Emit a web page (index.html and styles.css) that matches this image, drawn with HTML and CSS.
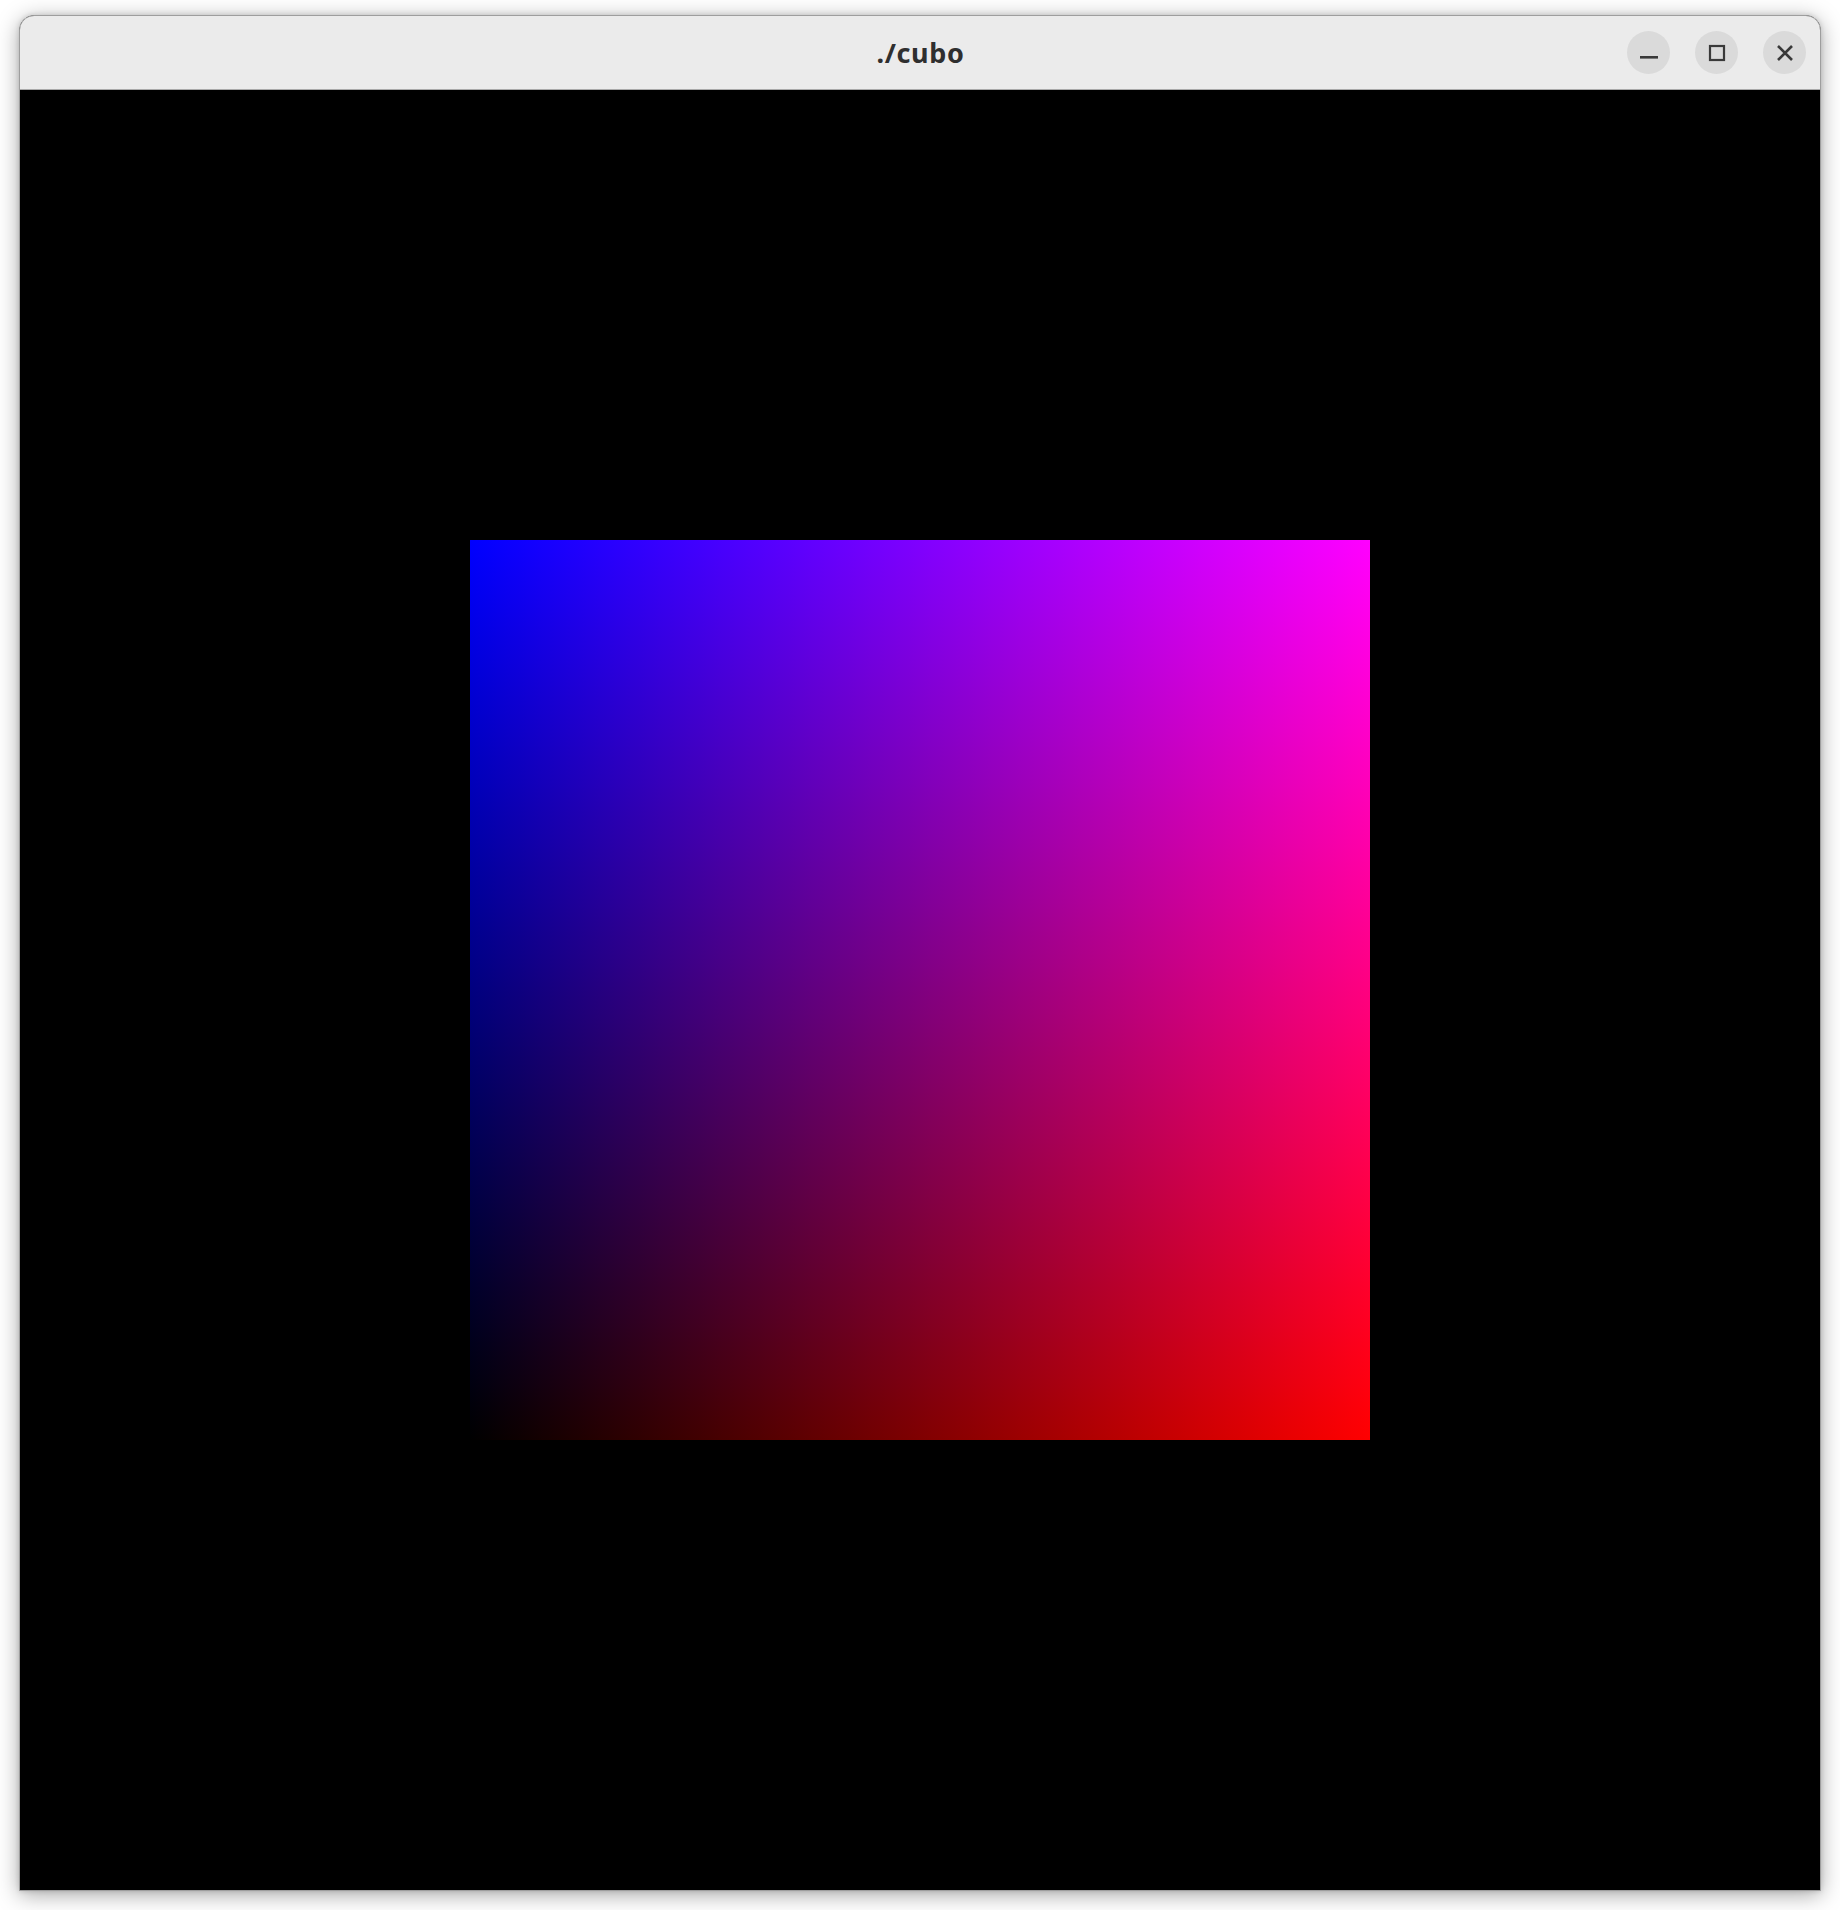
FILE: index.html
```html
<!DOCTYPE html>
<html lang="en">
<head>
<meta charset="utf-8">
<title>./cubo</title>
<link rel="stylesheet" href="styles.css">
</head>
<body>
<div class="desktop">
  <div class="window">
    <header class="titlebar">
      <div class="spacer"></div>
      <div class="title">./cubo</div>
      <div class="controls">
        <button class="ctl" aria-label="Minimize">
          <svg width="20" height="20" viewBox="0 0 20 20"><rect x="1" y="13" width="18" height="2.6" fill="#3a3a3a"/></svg>
        </button>
        <button class="ctl" aria-label="Maximize">
          <svg width="20" height="20" viewBox="0 0 20 20"><rect x="3" y="3" width="14" height="14" fill="none" stroke="#3a3a3a" stroke-width="2.2"/></svg>
        </button>
        <button class="ctl" aria-label="Close">
          <svg width="20" height="20" viewBox="0 0 20 20"><path d="M3 3 L17 17 M17 3 L3 17" stroke="#3a3a3a" stroke-width="2.6" stroke-linecap="butt"/></svg>
        </button>
      </div>
    </header>
    <main class="content">
      <div class="square"></div>
    </main>
  </div>
</div>
</body>
</html>
```

FILE: styles.css
```css
html, body {
  margin: 0;
  padding: 0;
  background: #ffffff;
}

.desktop {
  padding: 15px 0 0 19px;
  width: 1840px;
  height: 1910px;
  box-sizing: border-box;
}

.window {
  width: 1800px;
  border: 1px solid #9e9e9e;
  border-radius: 15px 15px 0 0;
  overflow: hidden;
  box-shadow: 0 4px 22px rgba(0, 0, 0, 0.34), 0 0 5px rgba(0, 0, 0, 0.15);
  background: #000;
}

.titlebar {
  height: 73px;
  background: #ebebeb;
  border-bottom: 1px solid #a9a9a9;
  display: grid;
  grid-template-columns: 1fr auto 1fr;
  align-items: center;
}

.title {
  font-family: "Noto Sans", "DejaVu Sans", sans-serif;
  font-weight: 700;
  font-size: 27px;
  letter-spacing: 0.6px;
  color: #2f2f2f;
  padding-left: 1px;
}

.controls {
  display: flex;
  justify-content: flex-end;
  align-items: center;
  gap: 25px;
  padding-right: 14px;
}

.ctl {
  width: 43px;
  height: 43px;
  border-radius: 50%;
  border: none;
  padding: 0;
  margin: 0;
  background: #dadada;
  display: flex;
  align-items: center;
  justify-content: center;
}

.ctl svg {
  display: block;
}

.content {
  height: 1800px;
  background: #000;
  display: flex;
  align-items: center;
  justify-content: center;
}

.square {
  width: 900px;
  height: 900px;
  background: linear-gradient(to right, #000000, #ff0000), linear-gradient(to bottom, #0000ff, #000000);
  background-blend-mode: screen;
}
```
